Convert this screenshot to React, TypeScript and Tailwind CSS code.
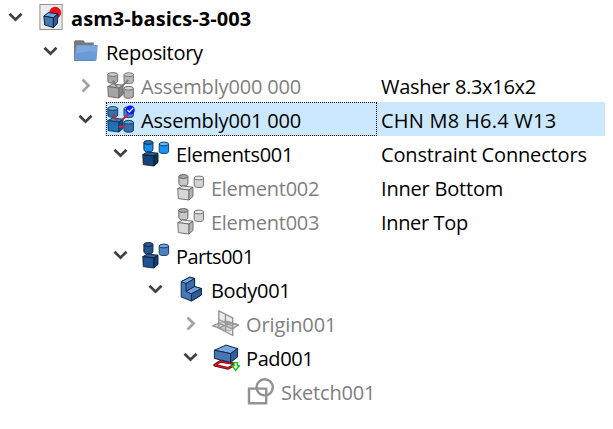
import React from "react";

type Icon = () => React.ReactElement;

function Cylinder({ x, y, w, h, top, side, stroke }: { x: number; y: number; w: number; h: number; top: string; side: string; stroke: string }) {
  const r = w / 2;
  return (
    <g stroke={stroke} strokeWidth="1">
      <path d={`M${x} ${y + 2.2}V${y + h - 2}A${r} 2.2 0 0 0 ${x + w} ${y + h - 2}V${y + 2.2}`} fill={side} />
      <ellipse cx={x + r} cy={y + 2.3} rx={r} ry="1.9" fill={top} />
    </g>
  );
}

function Cube({ top, left, right, stroke }: { top: string; left: string; right: string; stroke: string }) {
  return (
    <g stroke={stroke} strokeWidth="0.9" strokeLinejoin="round">
      <path d="M1.8 14.6L6.6 12L17 13.2L13 16Z" fill={top} />
      <path d="M1.8 14.6L13 16V26L2.3 24.6Z" fill={left} />
      <path d="M13 16L17 13.2V22.4L13 26Z" fill={right} />
    </g>
  );
}

const DocIcon: Icon = () => (
  <g>
    <rect x="3.9" y="0.5" width="22.2" height="25" fill="#ececec" stroke="#929292" />
    <circle cx="19.2" cy="8.7" r="5.6" fill="#f30d17" stroke="#c4000a" strokeWidth=".6" />
    <g stroke="#10243f" strokeLinejoin="round" strokeWidth="1">
      <path d="M7.8 12.2L12.3 8.6L22 9.8L17.4 13.8Z" fill="#74a5dc" />
      <path d="M7.8 12.2L17.4 13.8V23.6L8.8 21Z" fill="#4778b5" />
      <path d="M17.4 13.8L22 9.8L21.4 19.4L17.4 23.6Z" fill="#315c94" />
    </g>
  </g>
);

const FolderIcon: Icon = () => (
  <g>
    <path d="M3 22V3.8Q3 2.3 4.5 2.3H12Q13.2 2.3 13.8 4.6H22.8V22.4H3Z" fill="#777a7d" />
    <path d="M5 8.2Q5 7 6.2 7H26.8L25.6 21.4Q25.5 22.6 24.2 22.6H3.2Z" fill="#6a9bd6" />
    <path d="M5.6 7.6H26L25.5 14Q15 12 5 16Z" fill="#82ade0" opacity=".7" />
    <path d="M3.2 22.5H24.8" stroke="#4e7ebb" strokeWidth=".8" />
  </g>
);

const AssemblyGrey: Icon = () => (
  <g>
    <Cylinder x={1.9} y={0.2} w={9.8} h={10.8} top="#ccc" side="#a9a9a9" stroke="#707070" />
    <Cylinder x={18} y={0.4} w={9.4} h={11} top="#ccc" side="#b6b6b6" stroke="#777" />
    <Cube top="#c4c4c4" left="#a4a4a4" right="#838383" stroke="#666" />
    <Cylinder x={18} y={14} w={9.4} h={12} top="#d2d2d2" side="#b0b0b0" stroke="#6d6d6d" />
    <path d="M7 8.5L11 15M22.5 8L16 14M12.5 20.8H19" stroke="#7c7c7c" strokeWidth="1.9" fill="none" />
  </g>
);

const AssemblyBlue: Icon = () => (
  <g>
    <Cylinder x={1.9} y={0.2} w={9.8} h={10.8} top="#6ca6d9" side="#3472ac" stroke="#10395f" />
    <Cylinder x={18} y={0.4} w={9.4} h={11} top="#6ca6d9" side="#4383bf" stroke="#174a77" />
    <Cube top="#438ac8" left="#1f70b5" right="#124d86" stroke="#092f55" />
    <Cylinder x={18} y={14} w={9.4} h={12} top="#5c9fd8" side="#326fac" stroke="#10395f" />
    <path d="M7 8.5L11 15M22.5 8L16 14M12.5 20.8H19" stroke="#bd2949" strokeWidth="2" fill="none" />
    <circle cx="24.3" cy="4" r="4.5" fill="#0619ff" />
    <path d="M21.3 4L23.3 6L27.2 1.9" stroke="#d8e7ff" strokeWidth="1.5" fill="none" />
  </g>
);

const ElementsIcon: Icon = () => (
  <g>
    <Cylinder x={2.9} y={0.2} w={9} h={11.4} top="#2577b8" side="#178ff0" stroke="#092b4c" />
    <Cylinder x={18.2} y={1.7} w={9.4} h={11.6} top="#5bb8fa" side="#1791f5" stroke="#174267" />
    <Cube top="#255e9d" left="#174579" right="#0f3156" stroke="#071d36" />
  </g>
);

const ElementGrey: Icon = () => (
  <g>
    <Cylinder x={2.9} y={0.2} w={9} h={11.4} top="#ababab" side="#c8c8c8" stroke="#626262" />
    <Cylinder x={18.2} y={1.7} w={9.4} h={11.6} top="#e9e9e9" side="#d2d2d2" stroke="#737373" />
    <Cube top="#eee" left="#d8d8d8" right="#b4b4b4" stroke="#666" />
  </g>
);

const PartsIcon: Icon = () => (
  <g>
    <Cylinder x={2.9} y={0.2} w={9} h={11.4} top="#315f96" side="#235490" stroke="#081e36" />
    <Cylinder x={18.2} y={1.7} w={9.4} h={11.6} top="#72a5df" side="#4d82c5" stroke="#1b3c61" />
    <Cube top="#2d63a1" left="#205190" right="#163f70" stroke="#071d36" />
  </g>
);

const BodyIcon: Icon = () => (
  <g stroke="#102a49" strokeWidth="1" strokeLinejoin="round">
    <path d="M5.2 5.6L13.8 1.2L18.6 2.6V10.6L25.4 12.6V19L15.4 25L5.2 21Z" fill="#4579b8" />
    <path d="M5.2 5.6L13.8 1.2L18.6 2.6L10 7.6Z" fill="#78a6dc" />
    <path d="M10 7.6L18.6 2.6V10.6L10 15.4Z" fill="#3a6cab" />
    <path d="M10 15.4L18.6 10.6L25.4 12.6L15.4 17.8Z" fill="#71a3dc" />
    <path d="M15.4 17.8L25.4 12.6V19L15.4 25Z" fill="#2d5c98" />
  </g>
);

const OriginIcon: Icon = () => (
  <g stroke="#969696" fill="#d7d7d7" strokeWidth="1.4" strokeLinejoin="round">
    <path d="M1.5 15.8L14 11L27.3 15L18.5 21Z" fill="#ddd" />
    <path d="M7.8 0.9L21.7 7.8V25.5L7.8 18.2Z" fillOpacity=".5" />
    <path d="M7.8 9.7L21.7 16.2M14.5 4.2V21.7M7.8 13.4L21.7 18.8M14 11L27.3 15M8 18.2L20 12.8" fill="none" />
  </g>
);

const PadIcon: Icon = () => (
  <g strokeLinejoin="round">
    <path d="M3.6 21.2L9.4 17.4L25 20L17 24.4Z" fill="#fff" stroke="#6d0008" strokeWidth="2.7" />
    <path d="M3.6 21.2L9.4 17.4L25 20L17 24.4Z" fill="none" stroke="#d91723" strokeWidth="1.3" />
    <g stroke="#112d4d" strokeWidth="1">
      <path d="M3.4 6.2L15 1.1L26.6 4.6L19.6 9.6Z" fill="#78a7de" />
      <path d="M3.4 6.2L19.6 9.6V18.4L3.4 14.4Z" fill="#4677b2" />
      <path d="M19.6 9.6L26.6 4.6V13L19.6 18.4Z" fill="#2f5f99" />
    </g>
    <path d="M23 18.6H26.4V21.8H28.4L24.7 26.4L21 21.8H23Z" fill="#efffed" stroke="#08c91a" strokeWidth="1.4" />
  </g>
);

const SketchIcon: Icon = () => (
  <g fill="none" stroke="#929292" strokeWidth="2.4">
    <path d="M3 10.6H20.2V25.2H3Z" />
    <circle cx="18.7" cy="9.3" r="8.1" />
  </g>
);

type Node = { depth: string; name: string; tracking: string; icon: Icon; arrow?: "open" | "closed"; muted?: boolean; selected?: boolean; bold?: boolean; detail?: string; detailTracking?: string };

const nodes: Node[] = [
  { depth: "ml-0", name: "asm3-basics-3-003", tracking: "tracking-[0.06px]", icon: DocIcon, arrow: "open", bold: true },
  { depth: "ml-[35px]", name: "Repository", tracking: "tracking-[-0.3px]", icon: FolderIcon, arrow: "open" },
  { depth: "ml-[70px]", name: "Assembly000 000", tracking: "tracking-[-0.17px]", icon: AssemblyGrey, arrow: "closed", muted: true, detail: "Washer 8.3x16x2", detailTracking: "tracking-[-0.3px]" },
  { depth: "ml-[70px]", name: "Assembly001 000", tracking: "tracking-[-0.17px]", icon: AssemblyBlue, arrow: "open", selected: true, detail: "CHN M8 H6.4 W13", detailTracking: "tracking-[0.25px]" },
  { depth: "ml-[105px]", name: "Elements001", tracking: "tracking-[-0.3px]", icon: ElementsIcon, arrow: "open", detail: "Constraint Connectors", detailTracking: "tracking-[-0.17px]" },
  { depth: "ml-[140px]", name: "Element002", tracking: "tracking-[-0.27px]", icon: ElementGrey, muted: true, detail: "Inner Bottom", detailTracking: "tracking-[-0.2px]" },
  { depth: "ml-[140px]", name: "Element003", tracking: "tracking-[-0.27px]", icon: ElementGrey, muted: true, detail: "Inner Top", detailTracking: "tracking-[-0.35px]" },
  { depth: "ml-[105px]", name: "Parts001", tracking: "tracking-[-0.6px]", icon: PartsIcon, arrow: "open" },
  { depth: "ml-[140px]", name: "Body001", tracking: "tracking-[-0.3px]", icon: BodyIcon, arrow: "open" },
  { depth: "ml-[175px]", name: "Origin001", tracking: "tracking-[-0.1px]", icon: OriginIcon, arrow: "closed", muted: true },
  { depth: "ml-[175px]", name: "Pad001", tracking: "tracking-[-0.4px]", icon: PadIcon, arrow: "open" },
  { depth: "ml-[210px]", name: "Sketch001", tracking: "tracking-[-0.2px]", icon: SketchIcon, muted: true },
];

function Chevron({ kind }: { kind?: "open" | "closed" }) {
  return (
    <div className="h-full w-[35px] shrink-0">
      {kind && (
        <svg className="h-[34px] w-[30px]" viewBox="0 0 30 34" fill="none" strokeWidth="2.7">
          {kind === "open" ? <path d="M9.5 13.7L15.5 19.7L21.5 13.7" stroke="#404040" /> : <path d="M12.5 11.5L18.5 17.5L12.5 23.5" stroke="#a3a3a3" />}
        </svg>
      )}
    </div>
  );
}

function TreeRow({ node }: { node: Node }) {
  const Glyph = node.icon;
  return (
    <div className="flex h-[34px] w-[605px] leading-[34px] whitespace-nowrap">
      <div className="flex w-[377px] shrink-0">
        <div className={`${node.depth} flex min-w-0 flex-1`}>
          <Chevron kind={node.arrow} />
          <div className={`flex min-w-0 flex-1 pl-px ${node.selected ? "bg-[#cce8ff]" : ""}`}>
            <div className={`flex flex-1 border border-dotted ${node.selected ? "border-black" : "border-transparent"}`}>
              <svg className="-ml-px mt-[3px] h-7 w-7 shrink-0 overflow-visible" viewBox="0 0 28 28"><Glyph /></svg>
              <span className={`ml-[7px] h-8 pt-px ${node.tracking} ${node.bold ? "font-bold" : ""} ${node.muted ? "text-[#808080]" : "text-black"}`}>{node.name}</span>
            </div>
          </div>
        </div>
      </div>
      <div className={`h-[34px] flex-1 pl-1 pt-0.5 ${node.selected ? "bg-[#cce8ff]" : ""}`}>
        <span className={node.detailTracking}>{node.detail}</span>
      </div>
    </div>
  );
}

export default function App() {
  return (
    <main className="h-[429px] w-[613px] overflow-hidden bg-white font-['Open_Sans','Noto_Sans',sans-serif] text-[20px] text-black">
      {nodes.map((node) => <TreeRow key={node.name} node={node} />)}
    </main>
  );
}
